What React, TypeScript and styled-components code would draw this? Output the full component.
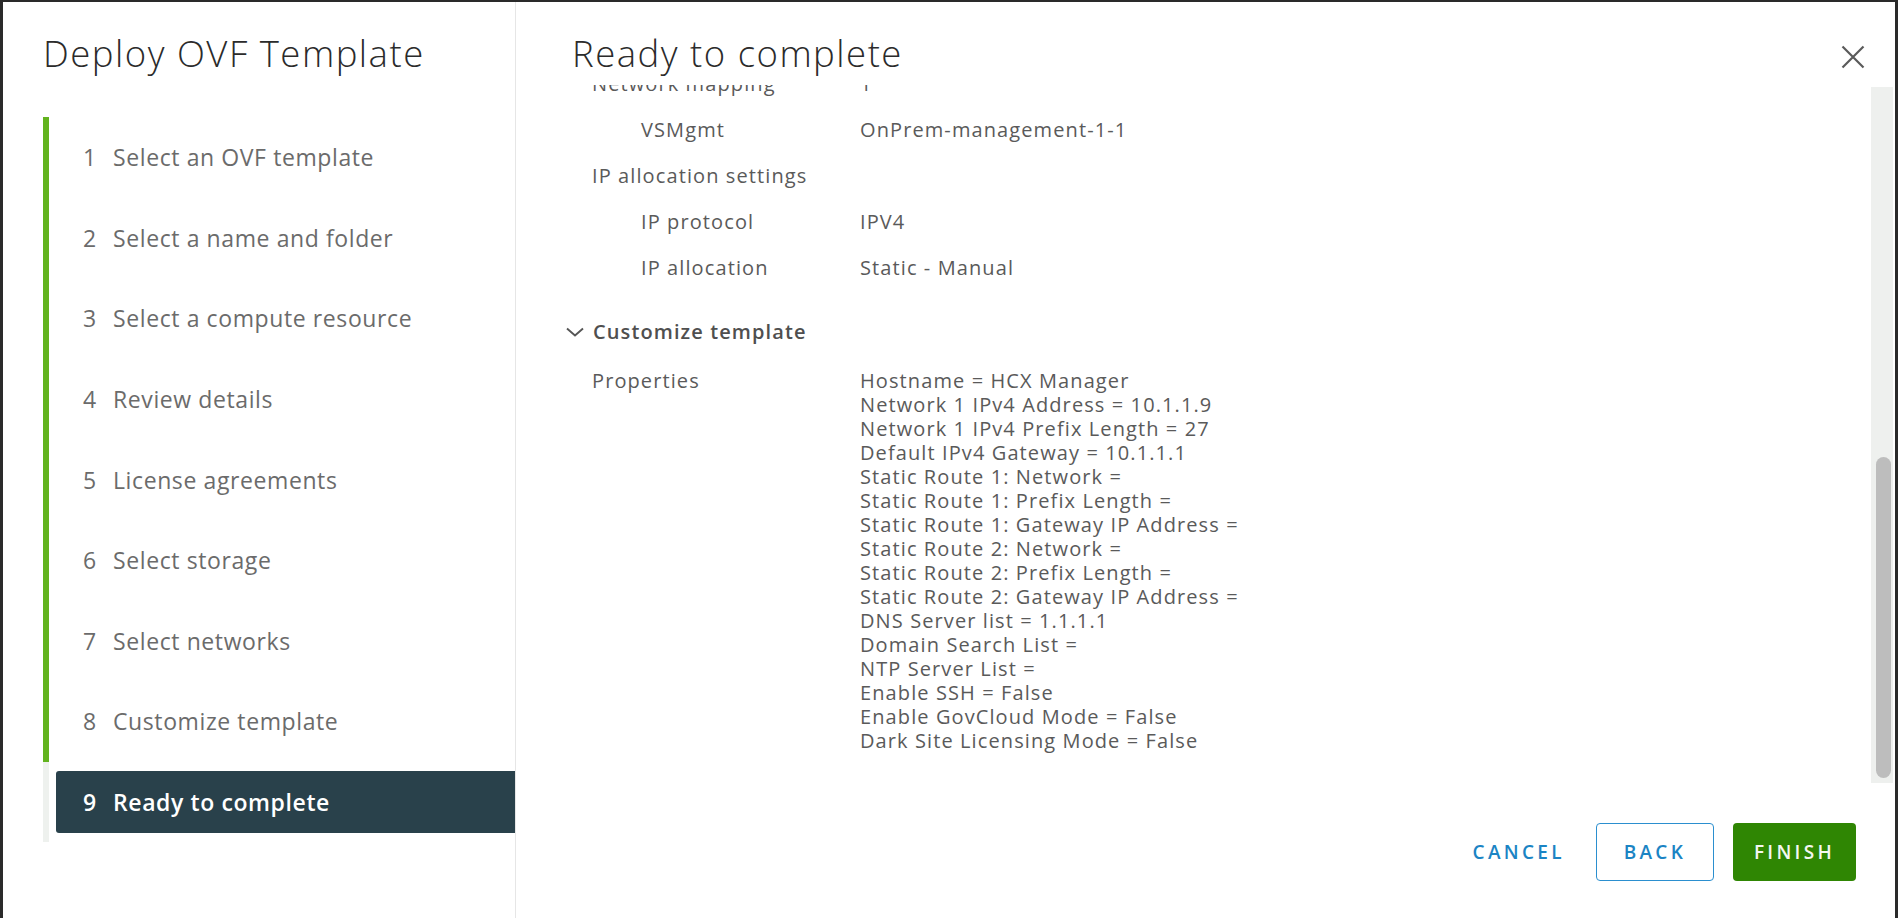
import styled, { createGlobalStyle } from "styled-components";

const steps = [
  "Select an OVF template",
  "Select a name and folder",
  "Select a compute resource",
  "Review details",
  "License agreements",
  "Select storage",
  "Select networks",
  "Customize template",
  "Ready to complete",
];
const currentStep = 9;

const summary = [
  { label: "Network mapping", value: "1" },
  { label: "VSMgmt", value: "OnPrem-management-1-1", nested: true },
  { label: "IP allocation settings", value: "" },
  { label: "IP protocol", value: "IPV4", nested: true },
  { label: "IP allocation", value: "Static - Manual", nested: true },
];

const properties = [
  "Hostname = HCX Manager",
  "Network 1 IPv4 Address = 10.1.1.9",
  "Network 1 IPv4 Prefix Length = 27",
  "Default IPv4 Gateway = 10.1.1.1",
  "Static Route 1: Network =",
  "Static Route 1: Prefix Length =",
  "Static Route 1: Gateway IP Address =",
  "Static Route 2: Network =",
  "Static Route 2: Prefix Length =",
  "Static Route 2: Gateway IP Address =",
  "DNS Server list = 1.1.1.1",
  "Domain Search List =",
  "NTP Server List =",
  "Enable SSH = False",
  "Enable GovCloud Mode = False",
  "Dark Site Licensing Mode = False",
];

const GlobalStyle = createGlobalStyle`
  html, body {
    margin: 0;
    padding: 0;
  }
  body {
    background: #2a2a2a;
    font-family: "Open Sans", "Liberation Sans", sans-serif;
    overflow: hidden;
  }
`;

const Backdrop = styled.div`
  height: 918px;
  padding: 2px 3px 0 3px;
  box-sizing: border-box;
`;

const Modal = styled.div`
  display: flex;
  height: 100%;
  background: #fff;
`;

const Sidebar = styled.aside`
  flex: none;
  width: 513px;
  box-sizing: border-box;
  border-right: 1px solid #e6e6e6;
  padding: 26px 0 0 40px;
`;

const Title = styled.h1`
  margin: 0;
  font-size: 36.5px;
  font-weight: 300;
  line-height: 50px;
  letter-spacing: 1.5px;
  color: #2b2b2b;
`;

const StepList = styled.ol`
  list-style: none;
  margin: 39px 0 0 0;
  padding: 0;
`;

const StepItem = styled.li<{ $done: boolean }>`
  border-left: 6px solid ${(p) => (p.$done ? "#62b31e" : "#eef1ee")};
  padding: 9px 0 9px 7px;
`;

const StepBox = styled.div<{ $active: boolean }>`
  display: flex;
  align-items: center;
  height: 62.6px;
  padding-left: 27px;
  border-radius: 3px 0 0 3px;
  font-size: 23px;
  letter-spacing: 0.6px;
  background: ${(p) => (p.$active ? "#29414b" : "transparent")};
  color: ${(p) => (p.$active ? "#ffffff" : "#6b6b6b")};
  font-weight: ${(p) => (p.$active ? 600 : 400)};
`;

const StepNum = styled.span`
  width: 30px;
  flex: none;
`;

const Main = styled.section`
  flex: 1;
  min-width: 0;
  display: flex;
  flex-direction: column;
`;

const Header = styled.header`
  display: flex;
  justify-content: space-between;
  align-items: flex-start;
  padding: 26px 30px 7px 56px;
`;

const CloseButton = styled.button`
  margin-top: 17px;
  padding: 0;
  border: none;
  background: none;
  width: 24px;
  height: 24px;
  color: #5a5a5a;
  cursor: pointer;
`;

const Body = styled.div`
  flex: 1;
  min-height: 0;
  display: flex;
  padding-right: 2px;
`;

const Viewport = styled.div`
  flex: 1;
  overflow: hidden;
  display: flex;
  flex-direction: column;
  justify-content: flex-end;
  padding: 0 0 30px 49px;
  font-size: 20px;
  letter-spacing: 1.1px;
  line-height: 24px;
  color: #5a5a5a;
`;

const Content = styled.div`
  flex: none;
`;

const Row = styled.div`
  display: grid;
  grid-template-columns: 268px 1fr;
  padding: 11px 0 11px 27px;
`;

const Label = styled.div<{ $nested?: boolean }>`
  padding-left: ${(p) => (p.$nested ? 49 : 0)}px;
`;

const SectionHeader = styled.div`
  display: flex;
  align-items: center;
  gap: 8px;
  margin: 29px 0 25px 0;
  font-weight: 600;
  color: #4f4f4f;
`;

const PropRow = styled(Row)`
  padding-top: 0;
  padding-bottom: 0;
`;

const Track = styled.div`
  flex: none;
  width: 22px;
  margin-top: 2px;
  box-sizing: border-box;
  padding: 0 2px 5px 5px;
  background: #eef0ee;
  display: flex;
  flex-direction: column;
  justify-content: flex-end;
`;

const Thumb = styled.div`
  height: 321px;
  border-radius: 8px;
  background: #bdbdbd;
`;

const Footer = styled.footer`
  flex: none;
  height: 135px;
  box-sizing: border-box;
  display: flex;
  justify-content: flex-end;
  align-items: flex-start;
  gap: 19px;
  padding: 40px 39px 0 0;
`;

const Button = styled.button<{ $variant: "flat" | "outline" | "primary" }>`
  height: 58px;
  min-width: ${(p) => (p.$variant === "flat" ? "auto" : "118px")};
  padding: 0 ${(p) => (p.$variant === "flat" ? 12 : 21)}px;
  border-radius: 4px;
  font-family: "Open Sans", "Liberation Sans", sans-serif;
  font-size: 19px;
  font-weight: 600;
  letter-spacing: 3.3px;
  text-transform: uppercase;
  cursor: pointer;
  border: ${(p) => (p.$variant === "outline" ? "1.5px solid #2b8fcf" : "none")};
  background: ${(p) => (p.$variant === "primary" ? "#2f8603" : "#fff")};
  color: ${(p) => (p.$variant === "primary" ? "#f4f7f2" : "#1b84c4")};
`;

const CloseIcon = () => (
  <svg width="24" height="24" viewBox="0 0 24 24" fill="none">
    <path d="M1.5 1.5 L22.5 22.5 M22.5 1.5 L1.5 22.5" stroke="currentColor" strokeWidth="2.2" />
  </svg>
);

const Chevron = () => (
  <svg width="20" height="12" viewBox="0 0 20 12" fill="none">
    <polyline points="2,2.5 10,9.5 18,2.5" stroke="#565656" strokeWidth="1.9" />
  </svg>
);

const App = () => {
  return (
    <>
      <GlobalStyle />
      <Backdrop>
        <Modal>
          <Sidebar>
            <Title>Deploy OVF Template</Title>
            <StepList>
              {steps.map((step, i) => (
                <StepItem key={step} $done={i + 1 < currentStep}>
                  <StepBox $active={i + 1 === currentStep}>
                    <StepNum>{i + 1}</StepNum>
                    {step}
                  </StepBox>
                </StepItem>
              ))}
            </StepList>
          </Sidebar>

          <Main>
            <Header>
              <Title>Ready to complete</Title>
              <CloseButton aria-label="Close">
                <CloseIcon />
              </CloseButton>
            </Header>

            <Body>
              <Viewport>
                <Content>
                  {summary.map((row) => (
                    <Row key={row.label}>
                      <Label $nested={row.nested}>{row.label}</Label>
                      <div>{row.value}</div>
                    </Row>
                  ))}
                  <SectionHeader>
                    <Chevron />
                    Customize template
                  </SectionHeader>
                  <PropRow>
                    <Label>Properties</Label>
                    <div>
                      {properties.map((line) => (
                        <div key={line}>{line}</div>
                      ))}
                    </div>
                  </PropRow>
                </Content>
              </Viewport>
              <Track>
                <Thumb />
              </Track>
            </Body>

            <Footer>
              <Button $variant="flat">Cancel</Button>
              <Button $variant="outline">Back</Button>
              <Button $variant="primary">Finish</Button>
            </Footer>
          </Main>
        </Modal>
      </Backdrop>
    </>
  );
};

export default App;
